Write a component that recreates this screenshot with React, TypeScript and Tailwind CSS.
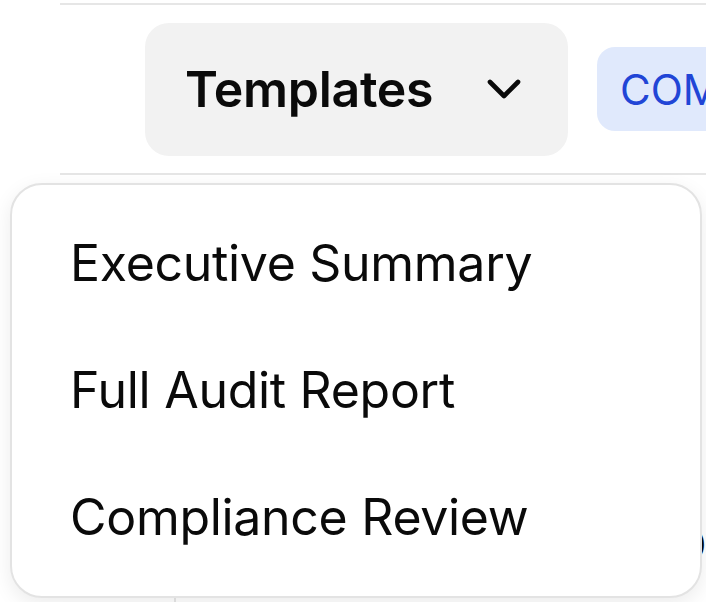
import { ChevronDown } from "lucide-react";

const items = ["Executive Summary", "Full Audit Report", "Compliance Review"];

const App = () => {
  return (
    <div
      className="relative w-[706px] h-[602px] overflow-hidden bg-white text-[#0a0a0a]"
      style={{ fontFamily: "Inter, 'Noto Sans', sans-serif" }}
    >
      {/* table header behind the menu */}
      <div className="mt-[3px] ml-[60px] border-t-2 border-b-2 border-[#e6e6e6]">
        <div className="flex items-center h-[168px] pl-[85px]">
          <button className="shrink-0 flex items-center justify-between w-[423px] h-[133px] pl-[40px] pr-[36px] rounded-[24px] bg-[#f2f2f2]">
            <span className="text-[50px] font-semibold leading-none tracking-[-0.3px]">
              Templates
            </span>
            <ChevronDown size={56} strokeWidth={2} />
          </button>
          <span className="shrink-0 ml-[29px] flex items-center h-[84px] pl-[23px] pr-[24px] rounded-[18px] bg-[#e0e9fc] text-[42px] font-normal text-[#2145d6] whitespace-nowrap">
            COMPLETED
          </span>
        </div>
      </div>
      <div className="flex h-[430px] ml-[60px]">
        <div className="w-[116px] mt-[300px] border-r-2 border-[#e6e6e6]"></div>
        <div className="flex-1 flex flex-col justify-end items-end pb-[30px]">
          <span className="text-[40px] font-medium">0</span>
        </div>
      </div>

      {/* dropdown menu */}
      <div className="absolute left-[10px] top-[183px] w-[692px] h-[415px] p-[14px] rounded-[32px] border-2 border-[#e3e3e3] bg-white shadow-[0_6px_20px_rgba(0,0,0,0.08)]">
        {items.map((item) => (
          <div
            key={item}
            className="flex items-center h-[127px] pl-[44px] text-[50px] leading-none tracking-[-0.3px]"
          >
            {item}
          </div>
        ))}
      </div>
    </div>
  );
};

export default App;
